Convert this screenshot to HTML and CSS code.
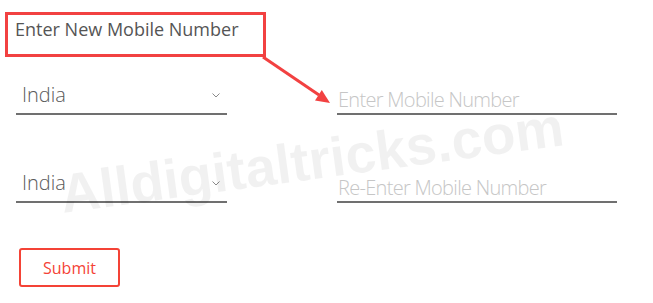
FILE: index.html
```html
<!DOCTYPE html>
<html lang="en">
<head>
<meta charset="utf-8">
<title>Enter New Mobile Number</title>
<link rel="stylesheet" href="styles.css">
</head>
<body>
<div class="page">
  <div class="title-box">Enter New Mobile Number</div>
  <form class="form">
    <div class="row">
      <div class="select">
        <span class="select-value">India</span>
        <svg class="chevron" width="8" height="5" viewBox="0 0 8 5"><polyline points="0.5,0.5 4,4 7.5,0.5" fill="none" stroke="#8a8a8a" stroke-width="1"/></svg>
      </div>
      <input class="phone" type="text" placeholder="Enter Mobile Number">
    </div>
    <div class="row row-second">
      <div class="select">
        <span class="select-value">India</span>
        <svg class="chevron" width="8" height="5" viewBox="0 0 8 5"><polyline points="0.5,0.5 4,4 7.5,0.5" fill="none" stroke="#8a8a8a" stroke-width="1"/></svg>
      </div>
      <input class="phone" type="text" placeholder="Re-Enter Mobile Number">
    </div>
    <button class="submit" type="button">Submit</button>
  </form>
  <svg class="overlay" width="653" height="303" viewBox="0 0 653 303">
    <text class="watermark" x="63" y="213" transform="rotate(-7.7 63 213)">Alldigitaltricks.com</text>
    <line x1="263" y1="57" x2="319" y2="95" stroke="#f24141" stroke-width="3"/>
    <polygon points="330,103 315,100.5 321.8,90" fill="#f24141"/>
  </svg>
</div>
</body>
</html>
```

FILE: styles.css
```css
html, body {
  margin: 0;
  padding: 0;
  background: #ffffff;
}

body {
  font-family: "Open Sans", "Noto Sans", sans-serif;
}

.page {
  position: relative;
  width: 653px;
  height: 303px;
  box-sizing: border-box;
  padding: 12px 0 0 5px;
  overflow: hidden;
}

.title-box {
  width: 261px;
  height: 45px;
  box-sizing: border-box;
  border: 3px solid #f24141;
  padding: 2px 0 0 7px;
  font-size: 18px;
  line-height: 24px;
  color: #555555;
}

.form {
  margin: 22px 0 0 11px;
}

.row {
  display: flex;
  gap: 110px;
}

.row-second {
  margin-top: 52px;
}

.select {
  width: 211px;
  height: 36px;
  box-sizing: border-box;
  display: flex;
  align-items: flex-end;
  justify-content: space-between;
  padding: 0 7px 5px 6px;
  border-bottom: 2px solid #707070;
}

.select-value {
  font-size: 20px;
  line-height: 26px;
  color: #5a5a5a;
  font-weight: 300;
}

.chevron {
  display: block;
  margin-bottom: 10px;
}

.phone {
  width: 280px;
  height: 36px;
  box-sizing: border-box;
  border: none;
  border-bottom: 2px solid #707070;
  padding: 6px 0 0 1px;
  margin: 0;
  font-family: "Open Sans", "Noto Sans", sans-serif;
  font-size: 20px;
  font-weight: 300;
  letter-spacing: -0.7px;
  color: #555555;
  background: transparent;
  outline: none;
}

.phone::placeholder {
  color: #c6c6c6;
  opacity: 1;
}

.submit {
  display: block;
  margin: 45px 0 0 3px;
  width: 101px;
  height: 39px;
  box-sizing: border-box;
  border: 2px solid #f44336;
  border-radius: 3px;
  background: #ffffff;
  color: #f44336;
  font-family: "Open Sans", "Noto Sans", sans-serif;
  font-size: 16px;
  padding: 0;
}

.overlay {
  position: absolute;
  left: 0;
  top: 0;
  pointer-events: none;
}

.watermark {
  font-family: "Liberation Sans", Arial, sans-serif;
  font-weight: 700;
  font-size: 55px;
  fill: #000000;
  fill-opacity: 0.055;
}
```
